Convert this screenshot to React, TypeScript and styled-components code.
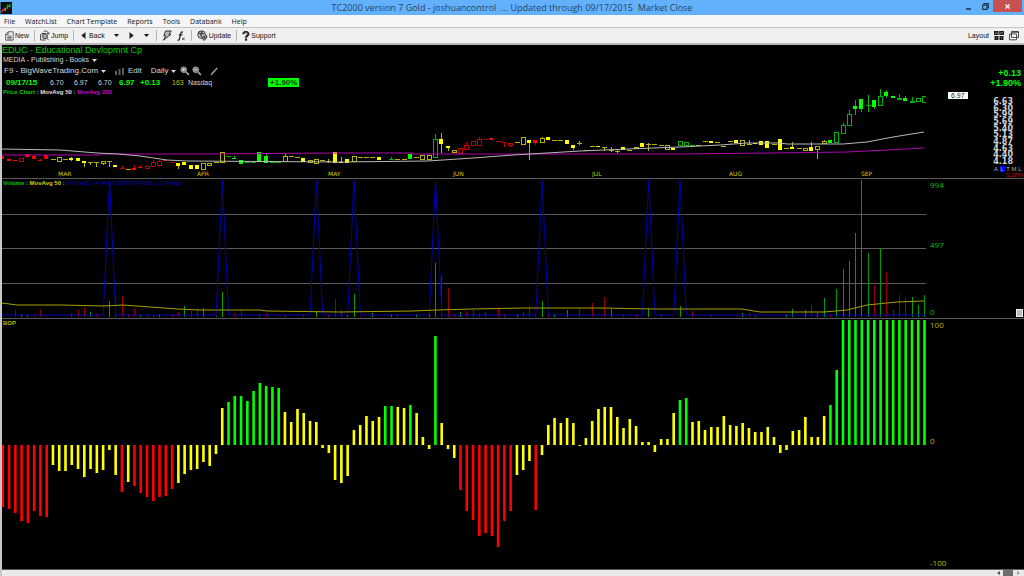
import React from "react";
import styled, { createGlobalStyle } from "styled-components";

const GlobalStyle = createGlobalStyle`
  *, *::before, *::after { box-sizing: border-box; }
  body {
    margin: 0;
    background: #000;
    font-family: "Liberation Sans", Arial, sans-serif;
    font-size: 8px;
  }
  h1, h2, p { margin: 0; font-weight: normal; }
  button, select { font: inherit; color: inherit; margin: 0; padding: 0; border: 0; background: none; }
  svg { display: block; }
`;

const GREEN = "#00ff00";
const YELLOW = "#ffff00";
const RED = "#ff0000";
const palette: Record<string, string> = { g: GREEN, y: YELLOW, r: RED };
const dimPalette: Record<string, string> = { g: "#00b400", y: "#b4b400", r: "#c00000" };

/* ---------- data ---------- */

const PLOT_WIDTH = 924;
const STEP = 6.27;
const barX = (i: number) => 0.9 + i * STEP;

/* colour, kind (s solid, h hollow, d dash), top, bottom, high, low */
const candles = `rs111,114 rs114,116 rs115,116 rh113,116 rs109,112,109,113 rs111,114 rs115,116,114,116 rs110,114
yd114 yh112,116 yd114 ys113,115,112,116 ys113,116 ys116,118,116,122 yd117,117,117,120 yd117,117,117,122 yh116,118,116,120
yd116,116,116,122 ys120,122 rd123,123,121,123 yd124 rs123,125,120,125 rs122,123,120,123 rh121,123 rh117,121,115,121
rh116,120,115,122 rs115,116 rd117 ys118,121,118,124 ys117,120 ys120,124 ys120,124 yh118,124 yh118,120 yd117 yh107,117
gd111 gs113,114,111,114 gs115,119 gd117 gd117 gs107,117 gs111,118,109,118 gd117 gd117 yh111,116,108,116 yd111 yd112
ys113,117 yh115,117 yh114,118 yd115 yd116,116,114,118 ys107,118 ys117,118,112,118 ys114,118 yh111,116 yd112,112,112,113
yd112 yd112 ys112,115 gd116 gd114,114,112,115 yd114 yd114 gs109,114 yd112 yh110,114 yh110,114 gh94,112,89,113
ys94,99,88,108 ys101,103,101,106 yh105,107 rh103,108 rh100,104,97,104 rh96,100 rh94,100,92,100 rd94 rs93,95,92,95 rd96
rd97,97,97,102 rh98,100,98,102 yd97 yh92,99 ys95,98,95,115 rs95,98,95,100 yh93,97,92,97 ys92,95 yd95 yd95 ys95,99
ys100,103,100,105 yd98,98,96,100 yd105 yd101 ys101,102 yd102,102,102,106 yd105,105,102,107 yd106,106,105,108 ys102,105
yd105 yh102,103 ys98,102 yd99,99,98,106 yd99 yd100 yh100,104 ys103,105 gh96,100 gh97,100 gd100 yd100 yd96 ys96,98
yd97 yd101 yd96 ys95,98 yh95,100 yd99,99,95,100 ys98,99 ys96,100 ys96,103 yd99 ys94,105 yd103 ys102,104,97,104 yd103
yh103,105 ys102,106,97,106 yh101,104,101,114 yh96,98,95,98 gs95,98 gh87,97 gh80,88,78,88 gh69,80,65,80 gs61,64,55,70
gs54,64,54,67 gd60,60,50,67 gs55,62,55,64 gh51,60,44,60 gs47,51,45,53 gs51,53 gh53,54,49,55 gs53,56,51,56 gh56,57,52,58
gh53,56 gh51,57`
  .split(/\s+/)
  .map((code) => {
    const [top, bottom = top, high = top, low = bottom] = code.slice(2).split(",").map(Number);
    return { color: code[0], kind: code[1], top, bottom, high, low };
  });

const maFifty =
  "0,104 58,105 95,108 116,109 138,111 165,115 185,116 338,117 425,116 441,115 471,113 511,110 545,108 578,106 651,103 678,102 718,100 745,98 778,98 785,99 841,99 865,97 891,92 922,87";
const maTwoHundred =
  "0,110 98,110 100,109 200,109 340,108 410,108 412,109 606,109 678,109 768,108 845,107 885,105 922,103";

/* index, colour, height */
const volume = `2r7 3g3 4g2 5r1 6r7 11r4 12r7 13r9 14g5 15r3 17g16 18r21 19r21 20r3 21r8 22g2 23g1 24g1 25g3 26r1 27r2 28r5
29g11 30r6 31r9 32g9 34g1 35g25 37r4 38r8 41r3 42r4 44r1 45g1 48r3 50g5 52r3 53r18 54r7 55g2 56g23 57r1 59g4 62g3 63r2
66g3 68g6 69g54 70r41 71r29 72r3 73g5 74r6 75r7 76r4 77r5 79r9 80r3 82g3 83r5 84r11 85r3 86g16 87r4 88g3 90g7 92r8 94r14
96r20 97g8 99r3 101r2 103g9 105r2 108g11 110r6 113r2 117r1 118g4 119r4 120g1 125g3 126g8 128g7 129r12 130g4 131g19 132r2
133g28 134g48 135g56 136g84 137g137 138g64 139r32 140g69 141r45 142r7 143r22 144r19 145g20 146g12 147g22`
  .split(/\s+/)
  .map((code) => {
    const [, index, color, height] = code.match(/(\d+)([gr])(\d+)/)!;
    return { index: Number(index), color, height: Number(height) };
  });

const volumeAverage =
  "0,124 15,126 60,126 101,127 121,126 148,128 175,130 198,131 258,131 265,132 338,133 410,132 435,131 470,130 520,129 600,129 650,130 740,130 758,133 822,133 845,131 865,126 895,123 922,122";

const spikes = [17, 35, 50, 56, 69, 86, 103, 108];
const spikeLine =
  "0,136 " +
  spikes.map((i) => `${barX(i - 1)},136 ${barX(i)},1 ${barX(i + 1)},136`).join(" ") +
  ` ${PLOT_WIDTH},136`;

const balance = `r-62 r-64 r-68 r-76 r-78 r-66 r-71 r-72 y-20 y-26 y-26 y-20 y-24 y-32 y-24 y-28 y-25 y-5 y-30 r-47 y-37 r-41
r-48 r-52 r-56 r-52 r-51 r-44 y-38 y-29 y-25 y-24 y-17 y-21 y-9 y37 g43 g49 g49 g44 g54 g62 g59 g58 g57 y33 y23 y36 y32
y24 y23 y-3 y-8 y-35 y-38 y-31 y15 y20 y29 y24 y28 g39 g39 y38 y37 g40 y32 y8 y-4 g109 y22 y-4 y-13 r-45 r-66 r-75 r-91
r-88 r-91 r-102 r-76 r-66 y-30 y-25 y-16 r-65 y-10 y20 y27 y22 y27 y22 y-1 y7 y24 y36 y38 y38 y28 y17 y26 y19 y3 y3 y-7
y6 y6 y32 g45 g47 y23 y24 y15 y18 y18 y29 y20 y19 y22 y17 y13 y13 y18 y8 y-8 y-5 y14 y15 y28 y8 y8 y29 g40 g75 g125 g125
g125 g125 g125 g125 g125 g125 g125 g125 g125 g125 g125 g125`
  .split(/\s+/)
  .map((code) => ({ color: code[0], value: Number(code.slice(1)) }));

const months = ["MAR", "APR", "MAY", "JUN", "JUL", "AUG", "SEP"];
const priceTicks = ["6.63", "6.30", "5.99", "5.69", "5.40", "5.13", "4.87", "4.63", "4.40", "4.18"];
const menus = ["File", "WatchList", "Chart Template", "Reports", "Tools", "Databank", "Help"];

/* ---------- window frame ---------- */

const Window = styled.div`
  min-height: 100vh;
  display: flex;
  flex-direction: column;
  background: #000;
`;

const TitleBar = styled.header`
  height: 15px;
  display: grid;
  grid-template-columns: 64px 1fr 64px;
  align-items: center;
  background: #63b1fd;
`;

const Title = styled.h1`
  font: 9px/15px "Open Sans", "Noto Sans", sans-serif;
  color: #26435f;
  text-align: center;
  white-space: pre;
`;

const WindowButtons = styled.div`
  display: flex;
  align-self: start;
  justify-content: flex-end;
  padding-right: 2px;
`;

const WindowButton = styled.button<{ $close?: boolean }>`
  width: ${(p) => (p.$close ? 29 : 17)}px;
  height: 12px;
  display: grid;
  place-items: center;
  background: ${(p) => (p.$close ? "#c75050" : "transparent")};
`;

const MenuBar = styled.nav`
  height: 13px;
  display: flex;
  align-items: center;
  gap: 10px;
  padding-left: 4px;
  background: #f5f6f7;
  border-bottom: 1px solid #c4c4c4;
  font: 7px/11px "Open Sans", "Noto Sans", sans-serif;
  color: #111;
`;

const MenuButton = styled.button`
  white-space: nowrap;
`;

const ToolBar = styled.div`
  height: 17px;
  display: flex;
  align-items: center;
  gap: 5px;
  padding: 0 5px;
  background: #f0f0f0;
  border-bottom: 2px solid #b8b8b8;
  font-size: 7px;
  color: #111;
`;

const Tool = styled.button<{ $pad?: number }>`
  display: flex;
  align-items: center;
  gap: 1px;
  padding: 0 ${(p) => p.$pad ?? 0}px;
  white-space: nowrap;
`;

const Separator = styled.span`
  width: 1px;
  height: 11px;
  background: #b5b5b5;
`;

const LayoutTools = styled.div`
  display: flex;
  align-items: center;
  gap: 5px;
  margin-left: auto;
`;

/* ---------- panels ---------- */

const Workspace = styled.main`
  flex: 1;
  display: flex;
  flex-direction: column;
  border-left: 2px solid #c8c8c8;
`;

const Panel = styled.section<{ $height: number; $grow?: boolean }>`
  display: grid;
  grid-template-columns: minmax(0, 1fr) 98px;
  min-height: ${(p) => p.$height}px;
  flex: ${(p) => (p.$grow ? "1 0 auto" : "none")};
  border-bottom: 1px solid #5a5a5a;
`;

const Plot = styled.svg`
  grid-area: 1 / 1;
  width: 100%;
  height: 100%;
`;

const PanelOverlay = styled.div`
  grid-area: 1 / 1;
  z-index: 1;
  display: flex;
  flex-direction: column;
`;

const Company = styled.h2`
  font-size: 9px;
  line-height: 10px;
  color: #00c800;
`;

const Industry = styled.button`
  align-self: flex-start;
  display: flex;
  align-items: center;
  gap: 3px;
  height: 10px;
  padding-left: 1px;
  font-size: 7px;
  line-height: 10px;
  color: #d8d8d8;
`;

const ControlRow = styled.div`
  display: flex;
  align-items: center;
  height: 12px;
  padding-left: 2px;
  color: #d8d8d8;
`;

const Picker = styled.label<{ $gap: number }>`
  display: flex;
  align-items: center;
  gap: 2px;
  margin-right: ${(p) => p.$gap}px;
`;

const PickerSelect = styled.select`
  appearance: none;
  font-size: 8px;
  line-height: 10px;
  height: 10px;
`;

const EditButton = styled.button`
  display: flex;
  align-items: center;
  gap: 4px;
  height: 10px;
  line-height: 10px;
  margin-right: 9px;
`;

const IconButton = styled.button`
  margin-right: 2px;
`;

const PencilButton = styled.button`
  margin-left: 6px;
`;

const QuoteRow = styled.div`
  display: grid;
  grid-template-columns: 44px 24px 24px 21px 21px 32px 16px 80px auto;
  justify-content: start;
  align-items: center;
  height: 11px;
  padding-left: 4px;
  color: #d8d8d8;
`;

const Quote = styled.span<{ $color?: string; $bold?: boolean; $size?: number }>`
  color: ${(p) => p.$color ?? "inherit"};
  font-weight: ${(p) => (p.$bold ? "bold" : "normal")};
  font-size: ${(p) => p.$size ?? 8}px;
  line-height: 9px;
`;

const ChangeBadge = styled.strong`
  padding: 0 2px;
  font-size: 8px;
  line-height: 9px;
  background: ${GREEN};
  color: #063f06;
`;

const Legend = styled.p`
  padding-left: 1px;
  font-size: 6px;
  font-weight: bold;
  line-height: 8px;
  white-space: pre;
  color: #b0b0b0;
`;

const Key = styled.span<{ $color: string; $light?: boolean }>`
  color: ${(p) => p.$color};
  font-weight: ${(p) => (p.$light ? "normal" : "bold")};
`;

const MonthAxis = styled.div`
  display: grid;
  grid-template-columns: 139fr 131fr 125fr 139fr 137fr 132fr 65fr;
  margin-top: auto;
  padding-left: 56px;
  font: 6px/9px "DejaVu Sans", sans-serif;
  color: #d0d000;
`;

const PriceScale = styled.aside`
  display: grid;
  grid-template-columns: 1fr auto;
  grid-template-rows: 43px 11px 1fr auto;
  padding-right: 1px;
`;

const NetChange = styled.div`
  grid-area: 1 / 2;
  align-self: end;
  display: flex;
  flex-direction: column;
  align-items: flex-end;
  padding-right: 2px;
  font-size: 9px;
  font-weight: bold;
  line-height: 10px;
  color: ${GREEN};
`;

const LastPrice = styled.output`
  grid-area: 2 / 1;
  align-self: end;
  justify-self: start;
  margin-left: 22px;
  padding: 0 3px;
  background: #fff;
  color: #222;
  font-size: 7px;
  line-height: 7px;
`;

const TickList = styled.ol`
  grid-area: 3 / 2;
  justify-self: end;
  display: flex;
  flex-direction: column;
  justify-content: space-between;
  height: 66px;
  margin: 0 10px 0 0;
  padding: 0;
  list-style: none;
  font: bold 8px/6px "DejaVu Sans", sans-serif;
  color: #d0d0d0;
`;

const ScaleModes = styled.div`
  grid-area: 4 / 1 / auto / 3;
  justify-self: end;
  display: grid;
  grid-template-columns: repeat(5, 6px);
  justify-items: center;
  font-size: 6px;
  line-height: 6px;
  color: #b0b0b0;
`;

const ModeButton = styled.button<{ $on?: boolean }>`
  width: 5px;
  height: 6px;
  line-height: 6px;
  background: ${(p) => (p.$on ? "#0000ff" : "transparent")};
`;

const PercentRange = styled.span`
  grid-column: 1 / -1;
  justify-self: end;
  color: #d00000;
`;

const Scale = styled.aside<{ $rows: string; $color: string }>`
  display: grid;
  grid-template-columns: 1fr auto;
  grid-template-rows: ${(p) => p.$rows};
  padding: 1px 1px 1px 4px;
  font: 8px/10px "Open Sans", "Noto Sans", sans-serif;
  color: ${(p) => p.$color};
`;

const ScaleLabel = styled.span<{ $row: number }>`
  grid-area: ${(p) => p.$row} / 1;
`;

const PaneHandle = styled.button`
  grid-area: 3 / 2;
  align-self: end;
  width: 7px;
  height: 8px;
  background: #bcbcbc;
  border: 1px solid #efefef;
`;

const ScrollTrack = styled.footer`
  display: flex;
  justify-content: flex-end;
  height: 6px;
  padding-right: 1px;
  background: #e9e9e9;
`;

const ScrollButton = styled.button`
  width: 10px;
  display: grid;
  place-items: center;
`;

const ScrollThumb = styled.span`
  width: 10px;
  background: #6e6e6e;
`;

/* ---------- icons ---------- */

const Caret = () => (
  <svg width="5" height="3" viewBox="0 0 5 3" aria-hidden="true">
    <path d="M0 0h5L2.5 3z" fill="currentColor" />
  </svg>
);

const AppIcon = () => (
  <svg width="12" height="12" viewBox="0 0 11 11" aria-hidden="true">
    <rect x=".5" width="10.5" height="11" fill="#081008" />
    <path d="M1.5 9.5l1.5-2.5M2 6.8h3" stroke="#e02020" strokeWidth="1.4" fill="none" />
    <path d="M4.8 8V5.2" stroke="#e8a020" strokeWidth="1.2" />
    <path d="M6.8 2.5v4M9 1.5v3.5M6 5l3-2" stroke="#18a838" strokeWidth="1.2" />
  </svg>
);

const NewIcon = () => (
  <svg width="9" height="10" viewBox="0 0 9 10" fill="none" stroke="#444" strokeWidth=".8" aria-hidden="true">
    <path d="M3.2 .8h5v8.4H.6V3.4zM3.2.8v2.6H.6M2.2 5h4.5M2.2 6.5h4.5M2.2 8h4.5" />
  </svg>
);

const JumpIcon = () => (
  <svg width="10" height="11" viewBox="0 0 10 11" fill="none" stroke="#333" strokeWidth=".9" aria-hidden="true">
    <path d="M.6 10V4.5L2 3.5h4M.6 10h5M8.8 10.3L6.5 8" />
    <circle cx="5" cy="6.2" r="2.5" fill="#aaa" />
    <path d="M3.4 2.2c1.5-2 4.6-1.5 4.9 1.3M7 3l1.5 1.2L9.4 2.6" />
  </svg>
);

const ArrowIcon = ({ left }: { left?: boolean }) => (
  <svg width="5" height="7" viewBox="0 0 5 7" aria-hidden="true">
    <path d={left ? "M4.5 0v7L.3 3.5z" : "M.5 0v7l4.2-3.5z"} fill="#222" />
  </svg>
);

const BoltIcon = () => (
  <svg width="10" height="11" viewBox="0 0 10 11" aria-hidden="true">
    <path d="M3.5 1h5.7L7 4.3h2L1.4 10.2 4 6H1.8z" fill="#bbb" stroke="#222" strokeWidth=".9" />
  </svg>
);

const FunctionIcon = () => (
  <svg width="9" height="10" viewBox="0 0 9 10" fill="none" stroke="#222" aria-hidden="true">
    <path d="M6 1.2C4.6.4 3.9 1.5 3.5 3.3L2.4 8c-.3 1.2-1 1.4-1.8 1M1.8 3.8h3.6" strokeWidth="1.2" />
    <path d="M5 6.8l2.6 2M7.8 6.7L5 8.9" strokeWidth=".7" />
  </svg>
);

const UpdateIcon = () => (
  <svg width="11" height="11" viewBox="0 0 11 11" fill="none" stroke="#333" aria-hidden="true">
    <circle cx="4.6" cy="4.6" r="3.8" strokeWidth="1" fill="#ccc" />
    <path d="M1.6 3.2c2 .2 2.9 1.2 2.4 2.3L5.5 7.4M5 1.5l-.5 2 2.5.3" strokeWidth="1.2" />
    <path d="M5 8.3l2.2-2.2v1.4c1.6 0 2.4-.8 2.4-2.3.9 2.6-.1 4.2-2.4 4.2v1.2z" strokeWidth=".7" fill="#777" />
  </svg>
);

const SupportIcon = () => (
  <svg width="8" height="10" viewBox="0 0 8 10" fill="none" aria-hidden="true">
    <path d="M1.4 3.2C1.4 .4 6.4.4 6.4 3 6.4 4.6 4 4.6 4 6.8" stroke="#222" strokeWidth="2.2" />
    <path d="M4 7.5v2.2" stroke="#222" strokeWidth="2.2" />
    <path d="M1.8 3.2C2 1.3 5.8 1.3 5.8 3" stroke="#bbb" strokeWidth=".6" />
  </svg>
);

const TilesIcon = () => (
  <svg width="10" height="9" viewBox="0 0 10 9" aria-hidden="true">
    <path d="M0 0h4.5v4H0zM5.2 0H10v4H5.2zM.5 5h4v4h-4zM5.5 5h4v4h-4z" fill="#1a1a1a" />
    <path d="M1 2.8l1.3-1 1.5.8M6 2.6l1.5-1 1.6.6M2 7h1M7 7h1" stroke="#ddd" strokeWidth=".6" fill="none" />
  </svg>
);

const RestoreIcon = () => (
  <svg width="7" height="7" viewBox="0 0 10 10" fill="none" stroke="#16334f" strokeWidth="1.6" aria-hidden="true">
    <path d="M2.8 3V.9h6.3v6H7.2M.9 3.2h6.2v5.9H.9z" />
  </svg>
);

const CascadeIcon = () => (
  <svg width="10" height="10" viewBox="0 0 10 10" fill="#fff" stroke="#333" strokeWidth=".9" aria-hidden="true">
    <path d="M2.5 .6h7v5.8h-7zM.6 3h7v5.8h-7z" />
    <path d="M2.5 1.1h7" strokeWidth="1.2" />
  </svg>
);

const BarsIcon = () => (
  <svg width="9" height="7" viewBox="0 0 9 7" aria-hidden="true">
    <path d="M0 3h2v4H0zM3.5 1h2v6h-2zM7 0h2v7H7z" fill="#5c5c5c" />
  </svg>
);

const ZoomIcon = ({ plus }: { plus?: boolean }) => (
  <svg width="10" height="10" viewBox="0 0 10 10" fill="none" stroke="#a8a8a8" aria-hidden="true">
    <circle cx="3.7" cy="3.7" r="2.8" fill="#777" />
    <path d={plus ? "M2.2 3.7h3M3.7 2.2v3" : "M2.2 3.7h3"} strokeWidth=".8" stroke="#fff" />
    <path d="M5.9 5.9l3 3" strokeWidth="1.5" />
  </svg>
);

const PencilIcon = () => (
  <svg width="8" height="9" viewBox="0 0 8 9" aria-hidden="true">
    <path d="M.5 8.5l1-2.3L6.8 .6l.9.9L2.5 7.2z" fill="#aaa" />
  </svg>
);

/* ---------- charts ---------- */

function PriceChart() {
  return (
    <Plot viewBox={`0 0 ${PLOT_WIDTH} 133`} preserveAspectRatio="none" role="img" aria-label="Price candles">
      {candles.map((c, i) => {
        const x = Math.floor(barX(i));
        const dim = dimPalette[c.color];
        const color = c.kind === "s" ? palette[c.color] : dim;
        const span = Math.max(c.bottom - c.top, 1);
        return (
          <g key={i}>
            {c.high < c.top && <path d={`M${x + 0.5} ${c.high}V${c.top}`} stroke={dim} />}
            {c.low > c.bottom && <path d={`M${x + 0.5} ${c.bottom}V${c.low}`} stroke={dim} />}
            {c.kind === "h" ? (
              <rect x={x - 1.5} y={c.top + 0.5} width="4" height={span} fill="#000" stroke={color} />
            ) : (
              <rect x={x - 2} y={c.top} width={c.kind === "d" ? 5 : 4} height={c.kind === "d" ? 1 : span} fill={color} />
            )}
          </g>
        );
      })}
      <polyline points={maTwoHundred} fill="none" stroke="#b000b0" />
      <polyline points={maFifty} fill="none" stroke="#b8b8b8" />
    </Plot>
  );
}

function VolumeChart() {
  return (
    <Plot viewBox={`0 0 ${PLOT_WIDTH} 139`} preserveAspectRatio="none" role="img" aria-label="Volume bars">
      {[35.5, 69.5, 104.5].map((y) => (
        <path key={y} d={`M0 ${y}H${PLOT_WIDTH}`} stroke="#5c5c5c" />
      ))}
      {volume.map((v) => (
        <rect
          key={v.index}
          x={Math.floor(barX(v.index))}
          y={138 - v.height}
          width="1"
          height={v.height}
          fill={v.color === "g" ? "#009c00" : "#980000"}
        />
      ))}
      <polyline points={spikeLine} fill="none" stroke="#0000b0" />
      <polyline points={volumeAverage} fill="none" stroke="#a8a000" />
    </Plot>
  );
}

function BalanceChart() {
  return (
    <Plot viewBox={`0 0 ${PLOT_WIDTH} 250`} preserveAspectRatio="none" role="img" aria-label="Balance of power">
      {balance.map((b, i) => (
        <rect
          key={i}
          x={barX(i) - 1.4}
          y={b.value > 0 ? 126 - b.value : 126}
          width="2.6"
          height={Math.abs(b.value)}
          fill={palette[b.color]}
        />
      ))}
    </Plot>
  );
}

/* ---------- page ---------- */

export default function App() {
  return (
    <>
      <GlobalStyle />
      <Window>
        <TitleBar>
          <AppIcon />
          <Title>{"TC2000 version 7 Gold - joshuancontrol  ... Updated through 09/17/2015  Market Close"}</Title>
          <WindowButtons>
            <WindowButton aria-label="Minimize">
              <svg width="5" height="7" viewBox="0 0 5 7" aria-hidden="true">
                <path d="M0 6h5" stroke="#16334f" strokeWidth="1.5" />
              </svg>
            </WindowButton>
            <WindowButton aria-label="Restore">
              <RestoreIcon />
            </WindowButton>
            <WindowButton aria-label="Close" $close>
              <svg width="5" height="5" viewBox="0 0 5 5" aria-hidden="true">
                <path d="M.5.5l4 4M4.5.5l-4 4" stroke="#fff" strokeWidth="1.2" />
              </svg>
            </WindowButton>
          </WindowButtons>
        </TitleBar>

        <MenuBar>
          {menus.map((name) => (
            <MenuButton key={name}>{name}</MenuButton>
          ))}
        </MenuBar>

        <ToolBar>
          <Tool>
            <NewIcon />
            New
          </Tool>
          <Separator />
          <Tool>
            <JumpIcon />
            Jump
          </Tool>
          <Separator />
          <Tool $pad={2}>
            <ArrowIcon left />
            &nbsp;Back
          </Tool>
          <Tool $pad={2} aria-label="Back history">
            <Caret />
          </Tool>
          <Tool $pad={3} aria-label="Forward">
            <ArrowIcon />
          </Tool>
          <Tool $pad={2} aria-label="Forward history">
            <Caret />
          </Tool>
          <Separator />
          <Tool aria-label="Quick scan">
            <BoltIcon />
          </Tool>
          <Tool aria-label="Formula">
            <FunctionIcon />
          </Tool>
          <Separator />
          <Tool>
            <UpdateIcon />
            Update
          </Tool>
          <Separator />
          <Tool>
            <SupportIcon />
            Support
          </Tool>
          <LayoutTools>
            <span>Layout</span>
            <Tool aria-label="Tile layout">
              <TilesIcon />
            </Tool>
            <Tool aria-label="Cascade windows">
              <CascadeIcon />
            </Tool>
          </LayoutTools>
        </ToolBar>

        <Workspace>
          <Panel $height={134}>
            <PriceChart />
            <PanelOverlay>
              <Company>EDUC - Educational Devlopmnt Cp</Company>
              <Industry>
                MEDIA - Publishing - Books
                <Caret />
              </Industry>
              <ControlRow>
                <Picker $gap={9}>
                  <PickerSelect aria-label="Chart template">
                    <option>F9 - BigWaveTrading.Com</option>
                  </PickerSelect>
                  <Caret />
                </Picker>
                <EditButton>
                  <BarsIcon />
                  Edit
                </EditButton>
                <Picker $gap={4}>
                  <PickerSelect aria-label="Time frame">
                    <option>Daily</option>
                  </PickerSelect>
                  <Caret />
                </Picker>
                <IconButton aria-label="Zoom in">
                  <ZoomIcon plus />
                </IconButton>
                <IconButton aria-label="Zoom out">
                  <ZoomIcon />
                </IconButton>
                <PencilButton aria-label="Draw">
                  <PencilIcon />
                </PencilButton>
              </ControlRow>
              <QuoteRow>
                <Quote $color={GREEN} $bold>09/17/15</Quote>
                <Quote $size={7}>6.70</Quote>
                <Quote $size={7}>6.97</Quote>
                <Quote $size={7}>6.70</Quote>
                <Quote $color={GREEN} $bold>6.97</Quote>
                <Quote $color={GREEN} $bold>+0.13</Quote>
                <Quote $size={7} $color="#c8c800">163</Quote>
                <Quote $size={7}>Nasdaq</Quote>
                <ChangeBadge>+1.90%</ChangeBadge>
              </QuoteRow>
              <Legend>
                <Key $color="#00c800">Price Chart</Key>
                {" : "}
                <Key $color="#e0e0e0">MovAvg 50</Key>
                {" : "}
                <Key $color="#c800c8">MovAvg 200</Key>
              </Legend>
              <MonthAxis>
                {months.map((m) => (
                  <span key={m}>{m}</span>
                ))}
              </MonthAxis>
            </PanelOverlay>
            <PriceScale>
              <NetChange>
                <span>+0.13</span>
                <span>+1.90%</span>
              </NetChange>
              <LastPrice>6.97</LastPrice>
              <TickList>
                {priceTicks.map((t) => (
                  <li key={t}>{t}</li>
                ))}
              </TickList>
              <ScaleModes>
                <ModeButton>A</ModeButton>
                <ModeButton $on>L</ModeButton>
                <ModeButton>T</ModeButton>
                <ModeButton>M</ModeButton>
                <ModeButton>L</ModeButton>
                <PercentRange>5.28%</PercentRange>
              </ScaleModes>
            </PriceScale>
          </Panel>

          <Panel $height={140}>
            <VolumeChart />
            <PanelOverlay>
              <Legend>
                <Key $color="#00c800">Volume</Key>
                {" : "}
                <Key $color="#d0d000">MovAvg 50</Key>
                {" : "}
                <Key $color="#0000d0" $light>%True(C &gt;= AVGC10 AND (ABS...)1 Period</Key>
              </Legend>
            </PanelOverlay>
            <Scale $rows="60fr 68fr 10px" $color="#00c000">
              <ScaleLabel $row={1}>994</ScaleLabel>
              <ScaleLabel $row={2}>497</ScaleLabel>
              <ScaleLabel $row={3}>0</ScaleLabel>
              <PaneHandle aria-label="Resize pane" />
            </Scale>
          </Panel>

          <Panel $height={251} $grow>
            <BalanceChart />
            <PanelOverlay>
              <Legend>
                <Key $color="#b4b400">BOP</Key>
              </Legend>
            </PanelOverlay>
            <Scale $rows="117fr 123fr 10px" $color="#c0b000">
              <ScaleLabel $row={1}>100</ScaleLabel>
              <ScaleLabel $row={2}>0</ScaleLabel>
              <ScaleLabel $row={3}>-100</ScaleLabel>
            </Scale>
          </Panel>

          <ScrollTrack>
            <ScrollButton aria-label="Scroll left">
              <svg width="3" height="4" viewBox="0 0 3 4" aria-hidden="true">
                <path d="M3 0v4L0 2z" fill="#555" />
              </svg>
            </ScrollButton>
            <ScrollThumb />
            <ScrollButton aria-label="Scroll right">
              <svg width="3" height="4" viewBox="0 0 3 4" aria-hidden="true">
                <path d="M0 0v4l3-2z" fill="#999" />
              </svg>
            </ScrollButton>
          </ScrollTrack>
        </Workspace>
      </Window>
    </>
  );
}
